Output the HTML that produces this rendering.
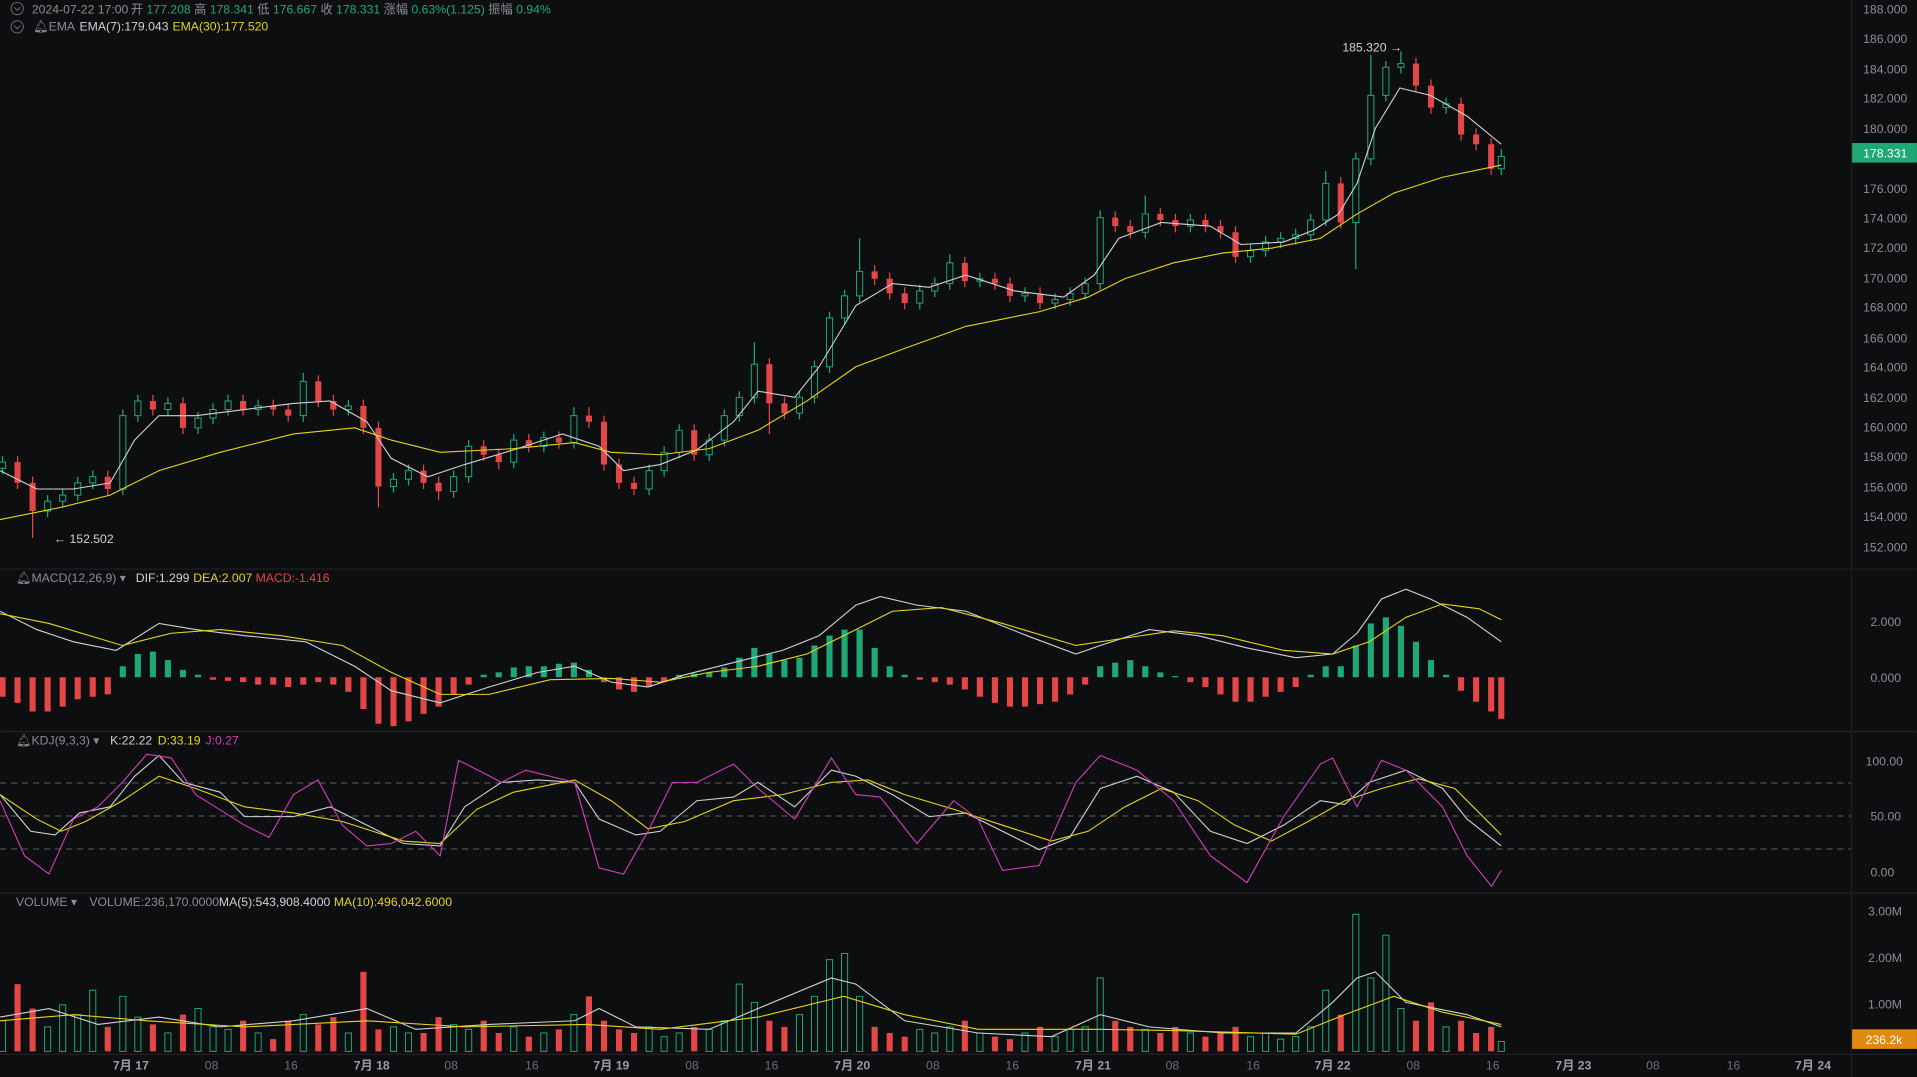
<!DOCTYPE html>
<html><head><meta charset="utf-8"><style>
html,body{margin:0;padding:0;background:#0d0e10;overflow:hidden}
svg{display:block}
text{font-family:"Liberation Sans","Noto Sans CJK SC",sans-serif}
</style></head><body>
<svg width="1917" height="1077" viewBox="0 0 1568 881" xmlns="http://www.w3.org/2000/svg">
<rect width="1568" height="881" fill="#0d0e10"/>
<g stroke="#1e2024" stroke-width="1">
<line x1="0" y1="465.5" x2="1568" y2="465.5"/>
<line x1="0" y1="598.5" x2="1568" y2="598.5"/>
<line x1="0" y1="730.5" x2="1568" y2="730.5"/>
<line x1="0" y1="862.5" x2="1568" y2="862.5"/>
<line x1="1514.5" y1="0" x2="1514.5" y2="881"/>
</g>
<g stroke="#5a5d63" stroke-dasharray="5,4" stroke-width="0.8">
<line x1="0" y1="640.5" x2="1514" y2="640.5"/>
<line x1="0" y1="667.5" x2="1514" y2="667.5"/>
<line x1="0" y1="694.5" x2="1514" y2="694.5"/>
</g>

<!-- candle wicks -->
<g stroke-width="1">
<path stroke="#1fa874" d="M2 373V388M38.9 405V423M51.2 400V415M63.5 390V410M75.8 385V400M100.4 335V405M112.7 323V345M137.3 325V340M161.9 337V355M174.2 330V347M186.5 323V340M211.1 327V340M248 305V345M284.9 327V340M321.8 387V403M334.1 380V397M371 385V407M383.3 360V395M420.2 355V383M444.8 353V370M469.4 333V367M530.9 380V405M543.2 365V390M555.5 347V375M580.1 355V377M592.4 335V365M604.7 320V345M617 280V330M653.9 320V343M666.2 295V330M678.5 255V305M690.8 237V265M703.1 195V247M752.3 233V253M764.6 227V243M776.9 208V237M801.5 223V235M838.4 235V247M863 240V253M875.3 235V250M887.6 227V245M899.9 172V237M936.8 160V195M973.7 175V190M1022.9 200V215M1035.2 193V210M1047.5 190V203M1059.8 187V200M1072.1 175V197M1084.4 140V185M1109 125V220M1121.3 45V135M1133.6 50V83M1145.9 42V60M1182.8 80V93M1228 122V143"/>
<path stroke="#e24646" d="M14.3 373V400M26.6 390V440M88.1 385V405M125 323V340M149.6 325V355M198.8 323V340M223.4 327V340M235.7 330V345M260.3 307V333M272.6 323V340M297.2 327V355M309.5 345V415M346.4 380V400M358.7 390V409M395.6 360V377M407.9 367V384M432.5 355V370M457.1 353V367M481.7 333V350M494 340V385M506.3 375V400M518.6 390V405M567.8 347V377M629.3 293V355M641.6 325V343M715.4 217V233M727.7 223V245M740 235V253M789.2 210V235M813.8 223V237M826.1 227V247M850.7 235V253M912.2 173V190M924.5 180V195M949.1 170V185M961.4 175V190M986 175V190M998.3 180V195M1010.6 185V215M1096.7 145V187M1158.2 47V75M1170.5 65V93M1195.1 80V115M1207.4 105V123M1219.7 113V143"/>
</g>
<!-- candle bodies -->
<path fill="#0d0e10" stroke="#1fa874" stroke-width="0.8" d="M-0.5 378h5v5h-5zM36.4 410h5v8h-5zM48.7 405h5v5h-5zM61 395h5v10h-5zM73.3 390h5v5h-5zM97.9 340h5v60h-5zM110.2 328h5v12h-5zM134.8 330h5v5h-5zM159.4 342h5v8h-5zM171.7 335h5v7h-5zM184 328h5v7h-5zM208.6 332h5v3h-5zM245.5 312h5v28h-5zM282.4 332h5v3h-5zM319.3 392h5v6h-5zM331.6 385h5v7h-5zM368.5 390h5v12h-5zM380.8 365h5v25h-5zM417.7 360h5v18h-5zM442.3 358h5v7h-5zM466.9 340h5v22h-5zM528.4 385h5v15h-5zM540.7 370h5v15h-5zM553 352h5v18h-5zM577.6 360h5v12h-5zM589.9 340h5v20h-5zM602.2 325h5v15h-5zM614.5 298h5v27h-5zM651.4 325h5v13h-5zM663.7 300h5v25h-5zM676 260h5v40h-5zM688.3 242h5v18h-5zM700.6 222h5v20h-5zM749.8 238h5v10h-5zM762.1 232h5v6h-5zM774.4 215h5v17h-5zM799 228h5v2h-5zM835.9 240h5v2h-5zM860.5 245h5v3h-5zM872.8 240h5v5h-5zM885.1 232h5v8h-5zM897.4 178h5v54h-5zM934.3 175h5v15h-5zM971.2 180h5v5h-5zM1020.4 205h5v5h-5zM1032.7 198h5v7h-5zM1045 195h5v3h-5zM1057.3 192h5v3h-5zM1069.6 180h5v12h-5zM1081.9 150h5v30h-5zM1106.5 130h5v52h-5zM1118.8 78h5v52h-5zM1131.1 55h5v23h-5zM1143.4 52h5v3h-5zM1180.3 85h5v3h-5zM1225.5 128h5v10h-5z"/>
<path fill="#e24646" d="M11.8 378h5v17h-5zM24.1 395h5v23h-5zM85.6 390h5v10h-5zM122.5 328h5v7h-5zM147.1 330h5v20h-5zM196.3 328h5v7h-5zM220.9 332h5v3h-5zM233.2 335h5v5h-5zM257.8 312h5v16h-5zM270.1 328h5v7h-5zM294.7 332h5v18h-5zM307 350h5v48h-5zM343.9 385h5v10h-5zM356.2 395h5v7h-5zM393.1 365h5v7h-5zM405.4 372h5v6h-5zM430 360h5v5h-5zM454.6 358h5v4h-5zM479.2 340h5v5h-5zM491.5 345h5v35h-5zM503.8 380h5v15h-5zM516.1 395h5v5h-5zM565.3 352h5v20h-5zM626.8 298h5v32h-5zM639.1 330h5v8h-5zM712.9 222h5v6h-5zM725.2 228h5v12h-5zM737.5 240h5v8h-5zM786.7 215h5v15h-5zM811.3 228h5v4h-5zM823.6 232h5v10h-5zM848.2 240h5v8h-5zM909.7 178h5v7h-5zM922 185h5v5h-5zM946.6 175h5v5h-5zM958.9 180h5v5h-5zM983.5 180h5v5h-5zM995.8 185h5v5h-5zM1008.1 190h5v20h-5zM1094.2 150h5v32h-5zM1155.7 52h5v18h-5zM1168 70h5v18h-5zM1192.6 85h5v25h-5zM1204.9 110h5v8h-5zM1217.2 118h5v20h-5z"/>
<!-- EMAs -->
<polyline fill="none" stroke="#d0d2d6" stroke-width="0.9" points="0,385 30,400 60,400 90,395 110,360 130,340 160,340 200,335 240,330 270,328 300,345 320,375 350,390 380,380 420,368 460,355 490,365 510,385 540,380 570,368 600,345 620,320 650,325 670,300 700,250 730,232 760,235 790,225 830,238 870,243 895,225 915,195 950,182 990,185 1015,200 1050,198 1075,188 1095,175 1110,150 1125,105 1145,72 1170,78 1200,95 1228,118"/>
<polyline fill="none" stroke="#e6d41a" stroke-width="0.9" points="0,425 50,415 90,405 130,385 180,370 240,355 290,350 320,360 360,370 420,367 470,362 500,370 540,372 580,367 620,352 660,328 700,300 740,285 790,267 850,255 890,243 920,228 960,215 1000,207 1040,203 1080,195 1110,175 1140,158 1180,145 1228,135"/>

<!-- MACD histogram -->
<path fill="#1fa874" d="M97.9 545h5v9h-5zM110.2 535h5v19h-5zM122.5 533h5v21h-5zM134.8 540h5v14h-5zM147.1 548h5v6h-5zM159.4 552h5v2h-5zM393.1 552h5v2h-5zM405.4 550h5v4h-5zM417.7 546h5v8h-5zM430 545h5v9h-5zM442.3 545h5v9h-5zM454.6 543h5v11h-5zM466.9 542h5v12h-5zM479.2 548h5v6h-5zM553 552h5v2h-5zM565.3 551h5v3h-5zM577.6 550h5v4h-5zM589.9 546h5v8h-5zM602.2 538h5v16h-5zM614.5 530h5v24h-5zM626.8 535h5v19h-5zM639.1 540h5v14h-5zM651.4 538h5v16h-5zM663.7 528h5v26h-5zM676 520h5v34h-5zM688.3 515h5v39h-5zM700.6 515h5v39h-5zM712.9 530h5v24h-5zM725.2 545h5v9h-5zM737.5 552h5v2h-5zM897.4 545h5v9h-5zM909.7 542h5v12h-5zM922 540h5v14h-5zM934.3 545h5v9h-5zM946.6 550h5v4h-5zM958.9 553h5v1h-5zM1069.6 552h5v2h-5zM1081.9 545h5v9h-5zM1094.2 545h5v9h-5zM1106.5 528h5v26h-5zM1118.8 510h5v44h-5zM1131.1 505h5v49h-5zM1143.4 512h5v42h-5zM1155.7 525h5v29h-5zM1168 540h5v14h-5zM1180.3 552h5v2h-5z"/>
<path fill="#e24646" d="M-0.5 554h5v16h-5zM11.8 554h5v21h-5zM24.1 554h5v28h-5zM36.4 554h5v28h-5zM48.7 554h5v24h-5zM61 554h5v18h-5zM73.3 554h5v16h-5zM85.6 554h5v14h-5zM171.7 554h5v2h-5zM184 554h5v3h-5zM196.3 554h5v4h-5zM208.6 554h5v6h-5zM220.9 554h5v6h-5zM233.2 554h5v8h-5zM245.5 554h5v6h-5zM257.8 554h5v4h-5zM270.1 554h5v6h-5zM282.4 554h5v12h-5zM294.7 554h5v26h-5zM307 554h5v38h-5zM319.3 554h5v40h-5zM331.6 554h5v36h-5zM343.9 554h5v30h-5zM356.2 554h5v24h-5zM368.5 554h5v14h-5zM380.8 554h5v6h-5zM491.5 554h5v4h-5zM503.8 554h5v10h-5zM516.1 554h5v12h-5zM528.4 554h5v8h-5zM540.7 554h5v4h-5zM749.8 554h5v2h-5zM762.1 554h5v4h-5zM774.4 554h5v6h-5zM786.7 554h5v10h-5zM799 554h5v16h-5zM811.3 554h5v21h-5zM823.6 554h5v24h-5zM835.9 554h5v24h-5zM848.2 554h5v22h-5zM860.5 554h5v20h-5zM872.8 554h5v14h-5zM885.1 554h5v6h-5zM971.2 554h5v4h-5zM983.5 554h5v8h-5zM995.8 554h5v14h-5zM1008.1 554h5v20h-5zM1020.4 554h5v20h-5zM1032.7 554h5v16h-5zM1045 554h5v12h-5zM1057.3 554h5v8h-5zM1192.6 554h5v11h-5zM1204.9 554h5v20h-5zM1217.2 554h5v28h-5zM1225.5 554h5v34h-5z"/>
<polyline fill="none" stroke="#d0d2d6" stroke-width="0.9" points="0,500 30,515 60,525 95,532 130,510 160,515 200,520 250,525 290,545 320,565 360,575 400,562 440,550 470,545 500,558 530,562 560,552 600,542 640,532 670,520 700,495 720,488 750,495 790,500 840,520 880,535 900,528 940,515 980,520 1020,530 1060,538 1090,535 1110,518 1130,490 1150,482 1170,490 1200,505 1228,525"/>
<polyline fill="none" stroke="#e6d41a" stroke-width="0.9" points="0,502 40,510 80,522 100,528 140,518 180,515 230,520 280,528 320,550 360,568 400,568 450,556 500,555 540,558 580,550 620,545 660,535 700,515 730,500 770,497 820,510 880,528 920,522 960,516 1000,520 1050,532 1090,535 1120,525 1150,505 1180,494 1210,498 1228,507"/>

<!-- KDJ -->
<polyline fill="none" stroke="#d0d2d6" stroke-width="0.9" points="0,650 25,680 45,683 65,665 90,660 110,635 130,618 150,640 180,648 200,668 240,668 270,660 300,675 330,690 360,692 380,660 410,640 440,638 470,640 490,670 520,683 540,680 570,655 600,652 620,640 650,660 680,630 700,635 730,650 760,668 790,665 820,680 850,695 875,685 900,645 930,635 960,648 990,680 1020,690 1050,675 1080,655 1100,658 1120,640 1150,630 1180,645 1200,670 1228,692"/>
<polyline fill="none" stroke="#e6d41a" stroke-width="0.9" points="0,650 30,670 50,680 70,672 100,655 130,635 160,645 200,660 240,665 280,672 330,688 360,690 390,662 420,648 470,638 500,655 530,678 560,672 600,655 640,650 680,640 710,638 740,650 780,662 820,675 860,688 890,680 920,660 950,645 980,655 1010,675 1040,688 1070,672 1100,655 1130,645 1160,637 1190,645 1228,683"/>
<polyline fill="none" stroke="#d03fb8" stroke-width="0.9" points="0,655 20,700 40,715 60,670 80,660 100,640 120,617 140,620 160,650 200,675 220,685 240,650 260,638 280,675 300,692 320,690 340,680 360,700 375,622 395,632 410,640 430,630 470,640 490,710 510,715 530,680 550,640 570,640 600,625 620,645 650,670 680,620 700,650 720,652 750,690 780,655 800,670 820,712 850,708 880,640 900,618 930,630 960,655 990,700 1020,722 1050,668 1080,625 1090,620 1110,660 1130,622 1150,630 1180,660 1200,700 1220,725 1228,712"/>

<!-- Volume -->
<path fill="#0d0e10" stroke="#1fa874" stroke-width="0.8" d="M-0.5 835h5v25h-5zM36.4 840h5v20h-5zM48.7 822h5v38h-5zM61 830h5v30h-5zM73.3 810h5v50h-5zM97.9 815h5v45h-5zM110.2 832h5v28h-5zM134.8 845h5v15h-5zM159.4 825h5v35h-5zM171.7 840h5v20h-5zM184 842h5v18h-5zM208.6 845h5v15h-5zM245.5 830h5v30h-5zM282.4 845h5v15h-5zM319.3 840h5v20h-5zM331.6 845h5v15h-5zM368.5 838h5v22h-5zM380.8 842h5v18h-5zM417.7 840h5v20h-5zM442.3 845h5v15h-5zM466.9 830h5v30h-5zM528.4 840h5v20h-5zM540.7 848h5v12h-5zM553 845h5v15h-5zM577.6 842h5v18h-5zM589.9 835h5v25h-5zM602.2 805h5v55h-5zM614.5 820h5v40h-5zM651.4 830h5v30h-5zM663.7 815h5v45h-5zM676 785h5v75h-5zM688.3 780h5v80h-5zM700.6 815h5v45h-5zM749.8 842h5v18h-5zM762.1 845h5v15h-5zM774.4 840h5v20h-5zM799 845h5v15h-5zM835.9 845h5v15h-5zM860.5 848h5v12h-5zM872.8 842h5v18h-5zM885.1 840h5v20h-5zM897.4 800h5v60h-5zM934.3 842h5v18h-5zM971.2 845h5v15h-5zM1020.4 848h5v12h-5zM1032.7 845h5v15h-5zM1045 850h5v10h-5zM1057.3 848h5v12h-5zM1069.6 840h5v20h-5zM1081.9 810h5v50h-5zM1106.5 748h5v112h-5zM1118.8 800h5v60h-5zM1131.1 765h5v95h-5zM1143.4 825h5v35h-5zM1180.3 840h5v20h-5zM1225.5 852h5v8h-5z"/>
<path fill="#e24646" d="M11.8 805h5v55h-5zM24.1 825h5v35h-5zM85.6 840h5v20h-5zM122.5 838h5v22h-5zM147.1 830h5v30h-5zM196.3 835h5v25h-5zM220.9 850h5v10h-5zM233.2 835h5v25h-5zM257.8 838h5v22h-5zM270.1 832h5v28h-5zM294.7 795h5v65h-5zM307 842h5v18h-5zM343.9 845h5v15h-5zM356.2 832h5v28h-5zM393.1 835h5v25h-5zM405.4 845h5v15h-5zM430 848h5v12h-5zM454.6 842h5v18h-5zM479.2 815h5v45h-5zM491.5 835h5v25h-5zM503.8 842h5v18h-5zM516.1 845h5v15h-5zM565.3 840h5v20h-5zM626.8 835h5v25h-5zM639.1 840h5v20h-5zM712.9 840h5v20h-5zM725.2 845h5v15h-5zM737.5 848h5v12h-5zM786.7 835h5v25h-5zM811.3 848h5v12h-5zM823.6 850h5v10h-5zM848.2 840h5v20h-5zM909.7 835h5v25h-5zM922 840h5v20h-5zM946.6 845h5v15h-5zM958.9 840h5v20h-5zM983.5 848h5v12h-5zM995.8 845h5v15h-5zM1008.1 840h5v20h-5zM1094.2 830h5v30h-5zM1155.7 835h5v25h-5zM1168 820h5v40h-5zM1192.6 835h5v25h-5zM1204.9 845h5v15h-5zM1217.2 840h5v20h-5z"/>
<polyline fill="none" stroke="#d0d2d6" stroke-width="0.9" points="0,832 40,825 80,838 130,832 180,840 240,835 300,825 340,842 400,838 470,835 490,825 520,840 580,842 620,825 680,800 700,805 740,835 800,845 860,848 900,830 940,840 1000,845 1060,845 1090,820 1110,800 1125,795 1150,820 1200,830 1228,840"/>
<polyline fill="none" stroke="#e6d41a" stroke-width="0.9" points="0,835 60,830 120,835 200,840 300,835 380,840 480,838 540,842 620,832 690,815 740,830 800,842 900,842 960,843 1060,846 1100,830 1140,815 1180,828 1228,838"/>

<!-- Axis -->
<g font-size="10" fill="#8a8d93">
<text x="1524" y="11">188.000</text><text x="1524" y="35">186.000</text><text x="1524" y="60">184.000</text><text x="1524" y="84">182.000</text><text x="1524" y="109">180.000</text><text x="1524" y="158">176.000</text><text x="1524" y="182">174.000</text><text x="1524" y="206">172.000</text><text x="1524" y="231">170.000</text><text x="1524" y="255">168.000</text><text x="1524" y="280">166.000</text><text x="1524" y="304">164.000</text><text x="1524" y="329">162.000</text><text x="1524" y="353">160.000</text><text x="1524" y="377">158.000</text><text x="1524" y="402">156.000</text><text x="1524" y="426">154.000</text><text x="1524" y="451">152.000</text>
<text x="1530" y="512">2.000</text><text x="1530" y="558">0.000</text>
<text x="1526" y="626">100.00</text><text x="1530" y="671">50.00</text><text x="1530" y="717">0.00</text>
<text x="1528" y="749">3.00M</text><text x="1528" y="787">2.00M</text><text x="1528" y="825">1.00M</text>
</g>
<g font-size="10" text-anchor="middle">
<g fill="#9a9da3" font-weight="bold"><text x="107" y="875">7月 17</text><text x="304" y="875">7月 18</text><text x="500" y="875">7月 19</text><text x="697" y="875">7月 20</text><text x="894" y="875">7月 21</text><text x="1090" y="875">7月 22</text><text x="1287" y="875">7月 23</text><text x="1483" y="875">7月 24</text></g>
<g fill="#6a6d73"><text x="173" y="875">08</text><text x="238" y="875">16</text><text x="369" y="875">08</text><text x="435" y="875">16</text><text x="566" y="875">08</text><text x="631" y="875">16</text><text x="763" y="875">08</text><text x="828" y="875">16</text><text x="959" y="875">08</text><text x="1025" y="875">16</text><text x="1156" y="875">08</text><text x="1221" y="875">16</text><text x="1352" y="875">08</text><text x="1418" y="875">16</text></g>
</g>

<g font-size="10">
<circle cx="14" cy="7" r="5" fill="none" stroke="#6a6d73" stroke-width="0.8"/>
<path d="M11.5 6l2.5 2.5 2.5-2.5" fill="none" stroke="#6a6d73" stroke-width="0.8"/>
<text x="26" y="11" fill="#8a8d93">2024-07-22 17:00</text>
<text x="107" y="11" fill="#8a8d93">开 <tspan fill="#1fa874">177.208</tspan> 高 <tspan fill="#1fa874">178.341</tspan> 低 <tspan fill="#1fa874">176.667</tspan> 收 <tspan fill="#1fa874">178.331</tspan> 涨幅 <tspan fill="#1fa874">0.63%(1.125)</tspan> 振幅 <tspan fill="#1fa874">0.94%</tspan></text>
<circle cx="14" cy="22" r="5" fill="none" stroke="#6a6d73" stroke-width="0.8"/>
<path d="M11.5 21l2.5 2.5 2.5-2.5" fill="none" stroke="#6a6d73" stroke-width="0.8"/>
<text x="27" y="25" fill="#8a8d93">🔔︎EMA</text>
<text x="65" y="25" fill="#d0d2d6">EMA(7):179.043</text>
<text x="141" y="25" fill="#e6d41a">EMA(30):177.520</text>
<text x="13" y="476" fill="#8a8d93">🔔︎MACD(12,26,9)  ▾</text>
<text x="111" y="476" fill="#d0d2d6">DIF:1.299</text>
<text x="158" y="476" fill="#e6d41a">DEA:2.007</text>
<text x="209" y="476" fill="#e24646">MACD:-1.416</text>
<text x="13" y="609" fill="#8a8d93">🔔︎KDJ(9,3,3)  ▾</text>
<text x="90" y="609" fill="#d0d2d6">K:22.22</text>
<text x="129" y="609" fill="#e6d41a">D:33.19</text>
<text x="168" y="609" fill="#d03fb8">J:0.27</text>
<text x="13" y="741" fill="#8a8d93">VOLUME  ▾</text>
<text x="73" y="741" fill="#8a8d93">VOLUME:236,170.0000</text>
<text x="179" y="741" fill="#d0d2d6">MA(5):543,908.4000</text>
<text x="273" y="741" fill="#e6d41a">MA(10):496,042.6000</text>
<text x="1098" y="42" fill="#d0d2d6">185.320 →</text>
<text x="44" y="444" fill="#d0d2d6">← 152.502</text>
<rect x="1515" y="117" width="53" height="16" fill="#1fa874"/>
<text x="1524" y="129" fill="#fff">178.331</text>
<rect x="1515" y="842" width="53" height="16" fill="#e08a12"/>
<text x="1526" y="854" fill="#fff">236.2k</text>
</g>
</svg>
</body></html>
